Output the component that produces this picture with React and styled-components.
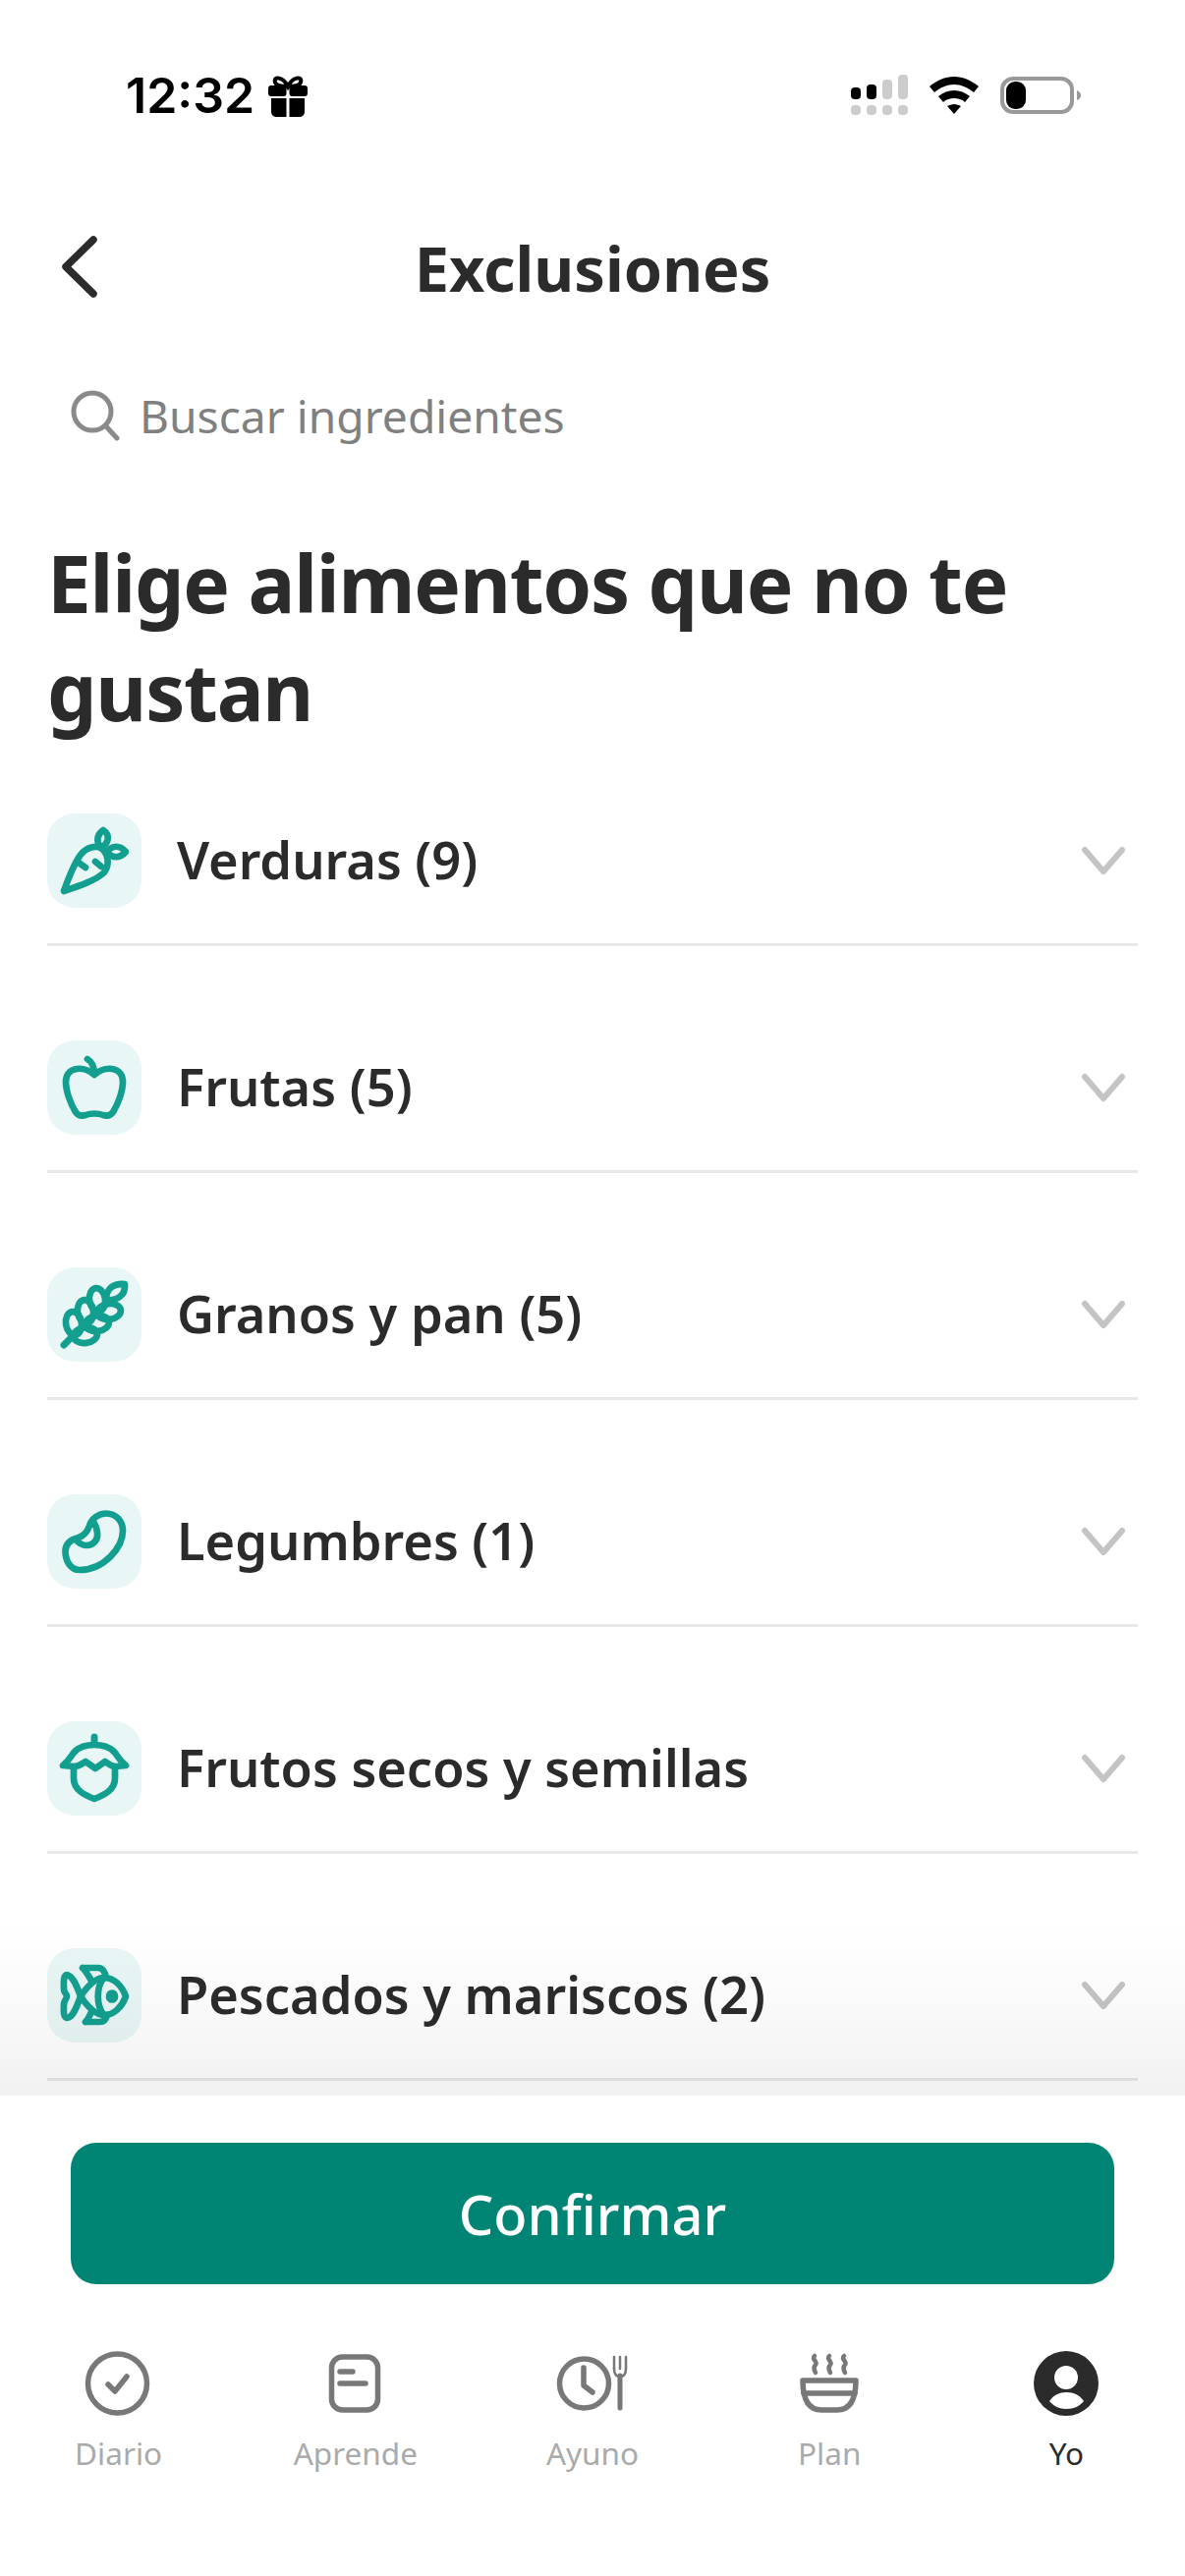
import React from 'react'
import styled, { createGlobalStyle } from 'styled-components'

const GlobalStyle = createGlobalStyle`
  html, body { margin: 0; padding: 0; background: #fff; }
  body { font-family: "Noto Sans", "Open Sans", sans-serif; color: #2b2b2b; }
`

const Page = styled.div`
  width: 1206px;
  height: 2622px;
  display: flex;
  flex-direction: column;
  overflow: hidden;
  background: #fff;
`

const StatusBar = styled.div`
  height: 194px;
  flex: none;
  display: flex;
  align-items: center;
  justify-content: space-between;
  padding: 0 106px 0 128px;
  box-sizing: border-box;
`

const StatusLeft = styled.div`
  display: flex;
  align-items: center;
  gap: 14px;
`

const Time = styled.span`
  font-family: Inter, sans-serif;
  font-size: 50px;
  font-weight: 600;
  line-height: 60px;
  color: #000;
`

const StatusRight = styled.div`
  display: flex;
  align-items: center;
  gap: 22px;
`

const Nav = styled.div`
  position: relative;
  height: 158px;
  flex: none;
  display: flex;
  align-items: center;
  justify-content: center;
`

const BackIcon = styled.svg`
  position: absolute;
  left: 56px;
  top: 40px;
`

const Title = styled.h1`
  margin: 0;
  font-size: 63px;
  font-weight: 700;
  line-height: 80px;
  color: #2b2b2b;
`

const Search = styled.div`
  height: 90px;
  margin-top: 26px;
  flex: none;
  display: flex;
  align-items: center;
  gap: 20px;
  padding-left: 72px;
`

const SearchText = styled.span`
  font-size: 46.2px;
  font-weight: 400;
  color: #808080;
`

const Heading = styled.h2`
  margin: 70px 0 0;
  padding: 0 48px;
  font-size: 80px;
  font-weight: 700;
  letter-spacing: -1.2px;
  line-height: 110px;
  color: #2b2b2b;
  flex: none;
`

const ListArea = styled.div`
  position: relative;
  flex: 1;
  min-height: 0;
  overflow: hidden;
  margin-top: 70px;
`

const Fade = styled.div`
  position: absolute;
  left: 0;
  right: 0;
  bottom: 0;
  height: 180px;
  background: linear-gradient(to bottom, rgba(0, 0, 0, 0), rgba(0, 0, 0, 0.015) 40%, rgba(0, 0, 0, 0.055));
`

const Row = styled.div`
  margin: 0 48px 96px;
  border-bottom: 3px solid #e8e8e8;
  height: 132px;
  display: flex;
  align-items: flex-start;
  gap: 36px;
`

const IconBox = styled.div`
  width: 96px;
  height: 96px;
  flex: none;
  border-radius: 28px;
  background: #e9f6f6;
  display: flex;
`

const RowLabel = styled.span`
  flex: 1;
  font-size: 52.4px;
  font-weight: 600;
  line-height: 94px;
  color: #2b2b2b;
`

const RowChevron = styled.svg`
  flex: none;
  margin: 33px 13px 0 0;
`

const Footer = styled.div`
  height: 489px;
  flex: none;
  background: #fff;
  display: flex;
  flex-direction: column;
`

const ConfirmButton = styled.div`
  margin: 48px 72px 0;
  height: 144px;
  flex: none;
  border-radius: 26px;
  background: #008575;
  color: #fff;
  font-size: 56px;
  font-weight: 500;
  display: flex;
  align-items: center;
  justify-content: center;
`

const Tabs = styled.div`
  margin-top: 61px;
  display: grid;
  grid-template-columns: repeat(5, 1fr);
`

const Tab = styled.div`
  display: flex;
  flex-direction: column;
  align-items: center;
  gap: 11px;
`

const TabLabel = styled.span`
  font-size: 31.5px;
  line-height: 40px;
  color: ${p => (p.$active ? '#2b2b2b' : '#aaaaaa')};
`

const Teal = ({ children }) => (
  <svg width="96" height="96" viewBox="0 0 96 96" fill="none" stroke="#139f8f" strokeWidth="6.7" strokeLinecap="round" strokeLinejoin="round">
    {children}
  </svg>
)

const Carrot = () => (
  <Teal>
    <path d="M17 79C22 65 28 50 34 42C40 34 50 32 56 36C62 42 64 52 58 60C50 68 32 74 17 79Z" />
    <path d="M32 50L39 55M49 49L55 54" />
    <path d="M57 17C51 21 49 28 55 35C62 31 65 22 57 17Z" />
    <path d="M61 39C66 32 74 32 80 39C74 46 66 46 61 39Z" />
  </Teal>
)

const Apple = () => (
  <Teal>
    <path d="M48 35C42 30 36 28 30 29C22 30 19 36 19 42C19 52 24 65 29 73C32 77 36 77 39 76C44 74 52 74 57 76C60 77 64 77 67 73C72 65 77 52 77 42C77 36 74 30 66 29C60 28 54 30 48 35Z" />
    <path d="M41 19C46 22 48 27 48 34" />
  </Teal>
)

const Wheat = () => (
  <Teal>
    <path d="M17 79L32 64" strokeWidth="7" />
    <path d="M79 17C68 16 60 21 60 33C72 34 80 28 79 17Z" />
    <ellipse cx="27" cy="57" rx="8" ry="12" transform="rotate(-8 27 57)" />
    <ellipse cx="39" cy="45" rx="8" ry="12" transform="rotate(-8 39 45)" />
    <ellipse cx="51" cy="33" rx="8" ry="12" transform="rotate(-8 51 33)" />
    <ellipse cx="39" cy="69" rx="12" ry="8" transform="rotate(-8 39 69)" />
    <ellipse cx="51" cy="57" rx="12" ry="8" transform="rotate(-8 51 57)" />
    <ellipse cx="63" cy="45" rx="12" ry="8" transform="rotate(-8 63 45)" />
  </Teal>
)

const Bean = () => (
  <Teal>
    <path d="M60 19.5C70 19.5 77 27 77 37C77 54 58 77 33 77C24 77 18.5 68 18.5 58C18.5 50 24 46 32 44C38 42 41 38 43 32C45 25 52 19.5 60 19.5Z" />
    <path d="M29 46C33 51 37 52 40 52C47 52 52 46 51 40C51 35 49 31 47 28" />
  </Teal>
)

const Acorn = () => (
  <Teal>
    <path d="M48 16V23" strokeWidth="7" />
    <path d="M16 45C22 40 24 36 27 32C32 26 40 24 48 24C56 24 64 26 69 32C72 36 74 40 80 45L70 46C64 46 62 43 59 41L49 48L39 41C36 43 33 46 27 46Z" />
    <path d="M27 47V58C27 70 38 75 48 79C58 75 69 70 69 58V47" />
  </Teal>
)

const Fish = () => (
  <Teal>
    <path d="M34 49C42 37 50 30 58 30C68 30 76 38 80 49C76 60 68 68 58 68C50 68 42 61 34 49Z" />
    <path d="M57 31C50 40 50 58 57 67" />
    <ellipse cx="66" cy="49" rx="3" ry="3.5" fill="#139f8f" />
    <path d="M34 49C30 38 26 28 20 27C16 27 17 38 17 42C17 45 20 47 20 49C20 51 17 54 17 57C17 62 16 70 20 71C26 71 30 60 34 49Z" />
    <path d="M36 20H52C57 20 59 25 60 30M36 20C40 24 42 28 45 33" />
    <path d="M39 75H54C58 75 60 72 61 68M39 75C42 72 43 69 45 65" />
  </Teal>
)

const categories = [
  { name: 'Verduras (9)', icon: Carrot },
  { name: 'Frutas (5)', icon: Apple },
  { name: 'Granos y pan (5)', icon: Wheat },
  { name: 'Legumbres (1)', icon: Bean },
  { name: 'Frutos secos y semillas', icon: Acorn },
  { name: 'Pescados y mariscos (2)', icon: Fish },
]

const TabSvg = ({ children }) => (
  <svg width="80" height="80" viewBox="0 0 80 80" fill="none" stroke="#787878" strokeWidth="5.5" strokeLinecap="round" strokeLinejoin="round">
    {children}
  </svg>
)

const tabs = [
  {
    name: 'Diario',
    icon: (
      <TabSvg>
        <circle cx="38.5" cy="40" r="30" />
        <path d="M29 41L36 48L48 33" />
      </TabSvg>
    ),
  },
  {
    name: 'Aprende',
    icon: (
      <TabSvg>
        <rect x="15.5" y="13" width="47" height="54" rx="11" />
        <path d="M24 28H37M24 40H50" />
      </TabSvg>
    ),
  },
  {
    name: 'Ayuno',
    icon: (
      <TabSvg>
        <circle cx="31.5" cy="40" r="25" />
        <path d="M31 24V42L40 49" />
        <path d="M62 13V25M68 13V25M74 13V25" strokeWidth="2.5" />
        <path d="M62 25C62 31 65 33 68 33C71 33 74 31 74 25" strokeWidth="2.5" />
        <path d="M68 32V65" strokeWidth="5" />
      </TabSvg>
    ),
  },
  {
    name: 'Plan',
    icon: (
      <TabSvg>
        <path d="M13 37H67C67 55 62 67 48 67H32C18 67 13 55 13 37Z" />
        <path d="M14 50H66" />
        <path d="M25 12C21 15 29 18 26 21C23 24 25 27 26 29M40 12C36 15 44 18 41 21C38 24 40 27 41 29M55 12C51 15 59 18 56 21C53 24 55 27 56 29" strokeWidth="4.5" />
      </TabSvg>
    ),
  },
  {
    name: 'Yo',
    active: true,
    icon: (
      <svg width="80" height="80" viewBox="0 0 80 80">
        <circle cx="40" cy="40" r="33" fill="#2b2b2b" />
        <circle cx="40" cy="34" r="12" fill="#fff" />
        <path d="M23 58C27 52 33 49 40.5 49C48 49 54 52 58 58C54 63 48 66 40 66C33 66 27 63 23 58Z" fill="#fff" />
      </svg>
    ),
  },
]

const GiftIcon = () => (
  <svg width="40" height="44" viewBox="0 0 40 44" fill="none">
    <path d="M20 13C15 3 5 2 7 9C8 12 13 13 20 13C27 13 32 12 33 9C35 2 25 3 20 13Z" stroke="#000" strokeWidth="4" />
    <rect x="0" y="12" width="18.5" height="11" rx="3" fill="#000" />
    <rect x="21.5" y="12" width="18.5" height="11" rx="3" fill="#000" />
    <path d="M3 25H18.5V44H9C5 44 3 42 3 38Z" fill="#000" />
    <path d="M21.5 25H37V38C37 42 35 44 31 44H21.5Z" fill="#000" />
  </svg>
)

const SignalIcon = () => (
  <svg width="58" height="42" viewBox="0 0 58 42">
    <rect x="0" y="13" width="10" height="12" rx="4" fill="#000" />
    <rect x="16" y="10" width="10" height="15" rx="4" fill="#000" />
    <rect x="32" y="5" width="10" height="20" rx="4" fill="#ccc" />
    <rect x="48" y="0" width="10" height="25" rx="4" fill="#ccc" />
    <rect x="0" y="31" width="10" height="10" rx="4" fill="#ccc" />
    <rect x="16" y="31" width="10" height="10" rx="4" fill="#ccc" />
    <rect x="32" y="31" width="10" height="10" rx="4" fill="#ccc" />
    <rect x="48" y="31" width="10" height="10" rx="4" fill="#ccc" />
  </svg>
)

const WifiIcon = () => (
  <svg width="50" height="38" viewBox="0 0 50 38">
    <path d="M25 0C34 0 43 4 50 10L45 16C39 11 32 8 25 8C18 8 11 11 5 16L0 10C7 4 16 0 25 0Z" fill="#000" />
    <path d="M25 14C31 14 36 16 41 20L36 26C33 23 29 22 25 22C21 22 17 23 14 26L9 20C14 16 19 14 25 14Z" fill="#000" />
    <path d="M25 28C27 28 30 29 32 30L25 38L18 30C20 29 23 28 25 28Z" fill="#000" />
  </svg>
)

const BatteryIcon = () => (
  <svg width="82" height="38" viewBox="0 0 82 38">
    <rect x="2" y="2" width="71" height="34" rx="11" fill="none" stroke="#999" strokeWidth="4" />
    <rect x="6" y="5" width="20" height="28" rx="9" fill="#000" />
    <path d="M78 14C81 15 82 17 82 19C82 21 81 23 78 24Z" fill="#999" />
  </svg>
)

export default function App() {
  return (
    <Page>
      <GlobalStyle />
      <StatusBar>
        <StatusLeft>
          <Time>12:32</Time>
          <GiftIcon />
        </StatusLeft>
        <StatusRight>
          <SignalIcon />
          <WifiIcon />
          <BatteryIcon />
        </StatusRight>
      </StatusBar>
      <Nav>
        <BackIcon width="48" height="72" viewBox="0 0 48 72" fill="none" stroke="#2b2b2b" strokeWidth="7.5" strokeLinecap="round" strokeLinejoin="round">
          <path d="M39 10L11 37.5L39 65" />
        </BackIcon>
        <Title>Exclusiones</Title>
      </Nav>
      <Search>
        <svg width="50" height="52" viewBox="0 0 50 52" fill="none" stroke="#8a8a8a" strokeWidth="5" strokeLinecap="round">
          <circle cx="22" cy="22" r="19" />
          <path d="M36 37L47 49" />
        </svg>
        <SearchText>Buscar ingredientes</SearchText>
      </Search>
      <Heading>Elige alimentos que no te gustan</Heading>
      <ListArea>
        {categories.map(({ name, icon: Icon }) => (
          <Row key={name}>
            <IconBox>
              <Icon />
            </IconBox>
            <RowLabel>{name}</RowLabel>
            <RowChevron width="44" height="30" viewBox="0 0 44 30" fill="none" stroke="#c4c4c4" strokeWidth="6" strokeLinecap="round" strokeLinejoin="round">
              <path d="M3 4L22 26L41 4" />
            </RowChevron>
          </Row>
        ))}
        <Fade />
      </ListArea>
      <Footer>
        <ConfirmButton>Confirmar</ConfirmButton>
        <Tabs>
          {tabs.map(tab => (
            <Tab key={tab.name}>
              {tab.icon}
              <TabLabel $active={tab.active}>{tab.name}</TabLabel>
            </Tab>
          ))}
        </Tabs>
      </Footer>
    </Page>
  )
}
